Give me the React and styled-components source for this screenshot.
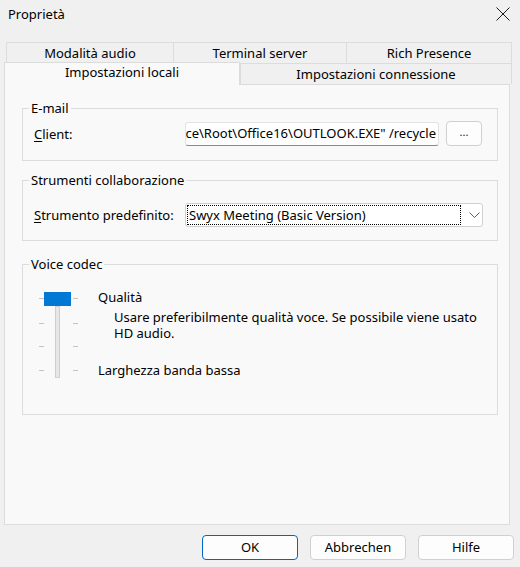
import React from "react";
import styled, { createGlobalStyle } from "styled-components";

const GlobalStyle = createGlobalStyle`
  html, body {
    margin: 0;
    padding: 0;
    background: #f0f0f0;
  }
  body {
    font-family: "Noto Sans", "Liberation Sans", sans-serif;
    font-size: 13px;
    color: #000;
  }
`;

const TOP_TABS = [
  { label: "Modalità audio", width: 168 },
  { label: "Terminal server", width: 174 },
  { label: "Rich Presence", width: 166 },
];

const TICKS = [6, 31, 54, 78];

export default function App() {
  return (
    <>
      <GlobalStyle />
      <Window>
        <TitleBar>
          <Title>Proprietà</Title>
          <CloseIcon viewBox="0 0 14 14">
            <path d="M0.5 0.5 L13.5 13.5 M13.5 0.5 L0.5 13.5" />
          </CloseIcon>
        </TitleBar>

        <TabRow $indent={6}>
          {TOP_TABS.map((tab) => (
            <Tab key={tab.label} $width={tab.width}>
              {tab.label}
            </Tab>
          ))}
        </TabRow>
        <TabRow $indent={4}>
          <Tab $width={236} $active>
            Impostazioni locali
          </Tab>
          <Tab $width={272}>Impostazioni connessione</Tab>
        </TabRow>

        <Panel>
          <Group $height={62}>
            <Legend>E-mail</Legend>
            <GroupBody $top={4}>
              <FieldRow>
                <FieldLabel>
                  <u>C</u>lient:
                </FieldLabel>
                <PathInput>
                  <span>
                    "C:\Program Files\Microsoft Office\Root\Office16\OUTLOOK.EXE" /recycle
                  </span>
                </PathInput>
                <BrowseButton>...</BrowseButton>
              </FieldRow>
            </GroupBody>
          </Group>

          <Group $height={70} $gap={10}>
            <Legend>Strumenti collaborazione</Legend>
            <GroupBody $top={13}>
              <FieldRow>
                <FieldLabel>
                  <u>S</u>trumento predefinito:
                </FieldLabel>
                <Select>
                  <FocusRect>Swyx Meeting (Basic Version)</FocusRect>
                  <Chevron viewBox="0 0 11 6">
                    <path d="M0.5 0.5 L5.5 5.5 L10.5 0.5" />
                  </Chevron>
                </Select>
              </FieldRow>
            </GroupBody>
          </Group>

          <Group $height={160} $gap={14}>
            <Legend>Voice codec</Legend>
            <CodecBody>
              <QualitySlider width="40" height="87" viewBox="0 0 40 87">
                {TICKS.map((y) => (
                  <g key={y}>
                    <rect x="0" y={y} width="5" height="1" fill="#c3c3c3" />
                    <rect x="34" y={y} width="5" height="1" fill="#c3c3c3" />
                  </g>
                ))}
                <rect
                  x="16.5"
                  y="14.5"
                  width="4"
                  height="71"
                  fill="#e7e7e7"
                  stroke="#cfcfcf"
                />
                <rect x="5" y="0" width="27" height="14" fill="#0078d4" />
              </QualitySlider>
              <CodecText>
                <LevelName>Qualità</LevelName>
                <LevelHint>
                  Usare preferibilmente qualità voce. Se possibile viene usato
                  HD audio.
                </LevelHint>
                <LevelName $top={21}>Larghezza banda bassa</LevelName>
              </CodecText>
            </CodecBody>
          </Group>
        </Panel>

        <ButtonBar>
          <DialogButton $primary>OK</DialogButton>
          <DialogButton>Abbrechen</DialogButton>
          <DialogButton>Hilfe</DialogButton>
        </ButtonBar>
      </Window>
    </>
  );
}

const Window = styled.div`
  display: flex;
  flex-direction: column;
  width: 520px;
  height: 567px;
  overflow: hidden;
`;

const TitleBar = styled.div`
  display: flex;
  align-items: center;
  justify-content: space-between;
  height: 30px;
  padding: 0 10px 2px 8px;
  box-sizing: border-box;
  margin-bottom: 12px;
`;

const Title = styled.span`
  font-size: 13px;
  line-height: 18px;
`;

const CloseIcon = styled.svg`
  width: 14px;
  height: 14px;
  fill: none;
  stroke: #1b1b1b;
  stroke-width: 1;
`;

const TabRow = styled.div`
  display: flex;
  align-items: flex-start;
  height: 21px;
  padding-left: ${(p) => p.$indent}px;
`;

const Tab = styled.div`
  position: relative;
  z-index: ${(p) => (p.$active ? 2 : 0)};
  width: ${(p) => p.$width}px;
  height: ${(p) => (p.$active ? 23 : 21)}px;
  margin: ${(p) => (p.$active ? "-1px 0 -1px" : "0 -1px 0 0")};
  box-sizing: border-box;
  border: 1px solid #dcdcdc;
  border-bottom: none;
  background: ${(p) => (p.$active ? "#f9f9f9" : "#f0f0f0")};
  text-align: center;
  line-height: ${(p) => (p.$active ? 19 : 20)}px;
  white-space: nowrap;
`;

const Panel = styled.div`
  position: relative;
  z-index: 1;
  display: flex;
  flex-direction: column;
  width: 506px;
  height: 441px;
  margin-left: 4px;
  padding: 14px 11px 0 17px;
  box-sizing: border-box;
  border: 1px solid #dcdcdc;
  background: #f9f9f9;
`;

const Group = styled.fieldset`
  min-inline-size: 0;
  height: ${(p) => p.$height}px;
  margin: ${(p) => p.$gap || 0}px 0 0;
  padding: 0;
  box-sizing: border-box;
  border: 1px solid #dcdcdc;
`;

const Legend = styled.legend`
  margin-left: 6px;
  padding: 0 2px;
  line-height: 18px;
`;

const GroupBody = styled.div`
  padding: ${(p) => p.$top}px 0 0 11px;
`;

const FieldRow = styled.div`
  display: flex;
  align-items: center;
  height: 25px;
`;

const FieldLabel = styled.span`
  width: 151px;
  flex-shrink: 0;
  line-height: 18px;

  u {
    text-underline-offset: 2px;
  }
`;

const PathInput = styled.div`
  display: flex;
  justify-content: flex-end;
  width: 254px;
  height: 24px;
  padding: 0 2px 0 1px;
  box-sizing: border-box;
  overflow: hidden;
  border: 1px solid #e3e3e3;
  border-bottom-color: #8a8a8a;
  border-radius: 3px;
  background: #fff;
  line-height: 21px;
  white-space: nowrap;
`;

const BrowseButton = styled.div`
  width: 36px;
  height: 25px;
  margin-left: 7px;
  box-sizing: border-box;
  border: 1px solid #d0d0d0;
  border-radius: 4px;
  background: #fdfdfd;
  text-align: center;
  font-size: 11px;
  line-height: 20px;
  color: #202020;
`;

const Select = styled.div`
  display: flex;
  align-items: center;
  width: 298px;
  height: 24px;
  padding: 1px;
  box-sizing: border-box;
  border: 1px solid #d0d0d0;
  border-radius: 3px;
  background: #fff;
`;

const FocusRect = styled.div`
  width: 274px;
  height: 20px;
  padding-left: 1px;
  box-sizing: border-box;
  border: 1px dotted #000;
  line-height: 18px;
  white-space: nowrap;
`;

const Chevron = styled.svg`
  width: 11px;
  height: 6px;
  margin-left: 8px;
  fill: none;
  stroke: #5f5f5f;
  stroke-width: 1;
`;

const CodecBody = styled.div`
  display: flex;
  align-items: flex-start;
  padding: 19px 0 0 16px;
`;

const QualitySlider = styled.svg`
  flex-shrink: 0;
  display: block;
`;

const CodecText = styled.div`
  margin: -3px 0 0 19px;
`;

const LevelName = styled.div`
  margin-top: ${(p) => p.$top || 0}px;
  line-height: 16px;
`;

const LevelHint = styled.div`
  margin-top: 4px;
  padding-left: 16px;
  line-height: 16px;
`;

const ButtonBar = styled.div`
  display: flex;
  justify-content: flex-end;
  gap: 12px;
  margin-top: 10px;
  padding-right: 6px;
`;

const DialogButton = styled.div`
  width: 96px;
  height: 25px;
  box-sizing: border-box;
  border: 1px solid ${(p) => (p.$primary ? "#0067c0" : "#d0d0d0")};
  border-radius: 4px;
  background: #fdfdfd;
  text-align: center;
  line-height: 22px;
`;
